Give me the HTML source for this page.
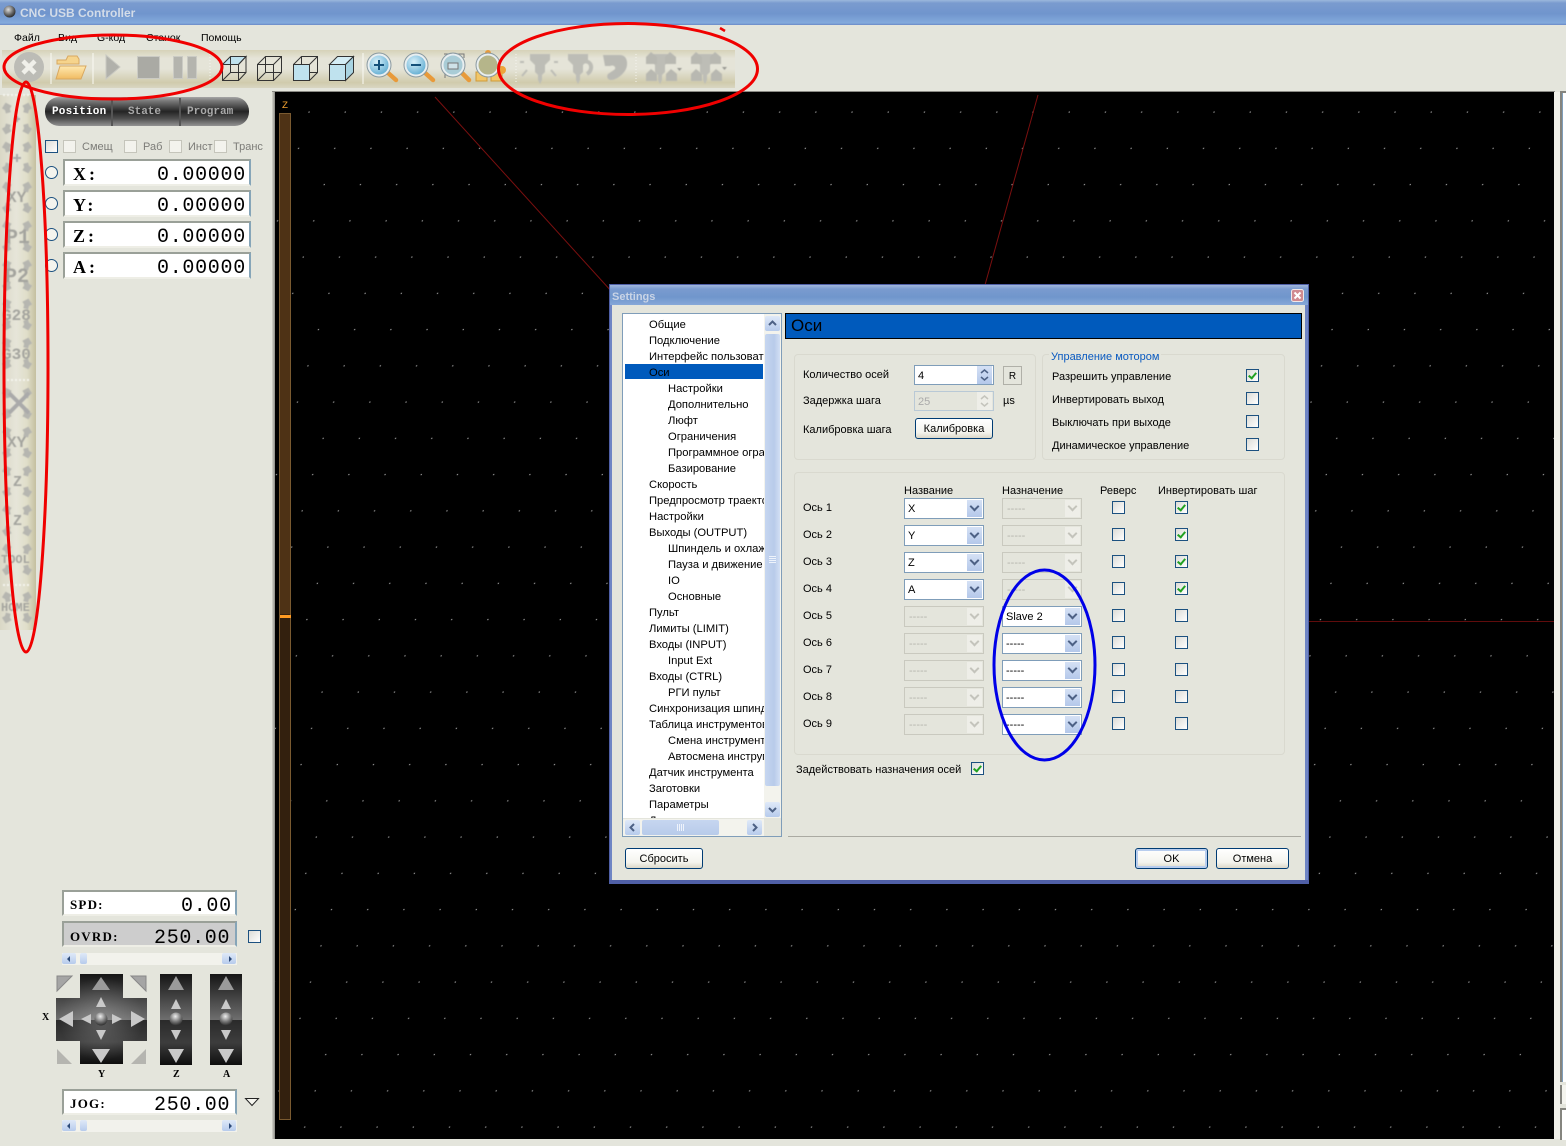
<!DOCTYPE html>
<html lang="ru"><head><meta charset="utf-8"><title>CNC USB Controller</title>
<style>
html,body{margin:0;padding:0;background:#e4e5dc}
#p{position:relative;width:1566px;height:1146px;overflow:hidden;background:#e4e5dc;font:11px/14px "Liberation Sans",sans-serif;color:#000}
#p div,#p span.a,#p svg.a{position:absolute}
.t{white-space:nowrap;transform:translateY(1px)}
.ck{width:11px;height:11px;border:1px solid #1c5180;background:linear-gradient(135deg,#dcdcd7,#fff)}
.ck.on::after{content:"";position:absolute;left:3px;top:1px;width:3px;height:6px;border:solid #21a121;border-width:0 2px 2px 0;transform:rotate(40deg)}
.ckd{width:11px;height:11px;border:1px solid #c5c5bb;background:#f3f3ed}
.rd{width:11px;height:11px;border:1px solid #1c5180;border-radius:50%;background:#f4f4ee}
.cb{width:78px;height:19px;border:1px solid #7f9db9;background:#fff;font-size:11px;line-height:21px;text-indent:3px;overflow:hidden}
.cb i{position:absolute;right:1px;top:1px;width:15px;height:17px;background:linear-gradient(#d5e1f5,#b4c8ea)}
.cb i::after{content:"";position:absolute;left:4px;top:3px;width:5px;height:5px;border:solid #4d6185;border-width:0 2px 2px 0;transform:rotate(45deg)}
.cb.d{border-color:#c9c9bf;background:#e4e5dc;color:#b5b5ad;text-indent:4px}
.cb.d i{background:#eeeee8}
.cb.d i::after{border-color:#c4c4bc}
.btn{border:1px solid #003c74;border-radius:3px;background:linear-gradient(#fff,#f4f4ee 70%,#dcd8c8);text-align:center;font-size:11px;line-height:21px;box-sizing:border-box;height:21px}
.gb{border:1px solid #d9d9cf;border-radius:4px;box-sizing:border-box}
.fld{box-sizing:border-box;left:63px;width:188px;height:27px;background:#fff;border-top:2px solid #9aa098;border-left:2px solid #9aa098;border-right:2px solid #86a5b8;border-bottom:2px solid #eeeee6}
.m{font-family:"Liberation Mono",monospace;white-space:nowrap}
.s{font-family:"Liberation Serif",serif;font-weight:bold;white-space:nowrap}
.sb{height:12px;background:#f2f2ec}
.sbb{width:14px;height:11px;background:linear-gradient(#dfe9f8,#b7cbec);border-radius:2px}
.ti{position:absolute;white-space:nowrap;height:16px;line-height:18px;font-size:11.2px}
.blr{filter:blur(.45px)}
</style></head><body>
<div id="p">

<!-- title bar -->
<div style="left:0;top:0;width:1566px;height:25px;background:linear-gradient(#9cb8dc 0,#7a9bcf 12%,#7095cd 55%,#83aadc 92%,#6a89c7 100%)"></div>
<svg class="a" style="left:2px;top:3px" width="16" height="16"><defs><radialGradient id="sph" cx=".4" cy=".35" r=".7"><stop offset="0" stop-color="#ddd"/><stop offset=".6" stop-color="#666"/><stop offset="1" stop-color="#222"/></radialGradient></defs><circle cx="7.5" cy="8.5" r="6" fill="url(#sph)"/></svg>
<div class="t" style="left:20px;top:4px;font-size:12px;font-weight:bold;line-height:16px;color:#d3dce8">CNC USB Controller</div>

<!-- menu -->
<div class="t" style="left:14px;top:30px;font-size:10.5px">Файл</div>
<div class="t" style="left:58px;top:30px;font-size:10.5px">Вид</div>
<div class="t" style="left:97px;top:30px;font-size:10.5px">G-код</div>
<div class="t" style="left:146px;top:30px;font-size:10.5px">Станок</div>
<div class="t" style="left:201px;top:30px;font-size:10.5px">Помощь</div>

<!-- toolbar -->
<div style="left:2px;top:50px;width:733px;height:38px;background:linear-gradient(#d6d2b8 0,#e5e4d8 22%,#e5e4d8 50%,#d0cbac 86%,#d9d6c2 100%)"></div>
<svg class="a" style="left:0;top:45px" width="760" height="48" viewBox="0 45 760 48">
<defs>
<radialGradient id="lens" cx=".4" cy=".35" r=".7"><stop offset="0" stop-color="#d8f0fa"/><stop offset="1" stop-color="#5aa9cf"/></radialGradient>
<linearGradient id="fold" x1="0" y1="0" x2="0" y2="1"><stop offset="0" stop-color="#ffe9b0"/><stop offset="1" stop-color="#f0bb62"/></linearGradient>
<symbol id="drill" viewBox="0 0 30 32" width="30" height="32"><path d="M5 1h20v6l-5 5v7l-3 3v5l-2 4-2-4v-5l-3-3v-7l-5-5z" fill="#bdbdb6"/></symbol>
<symbol id="pa" viewBox="0 0 12 12" width="12" height="12"><path d="M6 0l6 5v7H1V5z" fill="#b8b8b1"/></symbol>
</defs>
<circle cx="29" cy="67" r="15" fill="#bcbcb6"/><path d="M23 61l12 12M35 61L23 73" stroke="#f0f0ea" stroke-width="4.5"/>
<path d="M51 53v31M93 53v31M363 53v31" stroke="#fafaf4" stroke-width="1"/>
<path d="M57 60h9l2-4h9l2 3v5H57z" fill="#f6d48c" stroke="#d8a860"/><path d="M60 66h26l-5 13H56z" fill="url(#fold)" stroke="#d8a860"/>
<path d="M106 55l14 12-14 12z" fill="#b1b1ab" stroke="#c9c9c2"/>
<rect x="137.500" y="56.500" width="22" height="22" fill="#aaaaa4" stroke="#cbcbc4"/>
<rect x="173.500" y="56.500" width="9" height="22" fill="#b4b4ae" stroke="#cbcbc4"/><rect x="187.500" y="56.500" width="9" height="22" fill="#b4b4ae" stroke="#cbcbc4"/>
<path d="M210 54v28" stroke="#f5f5ef" stroke-dasharray="1 2"/>
<g fill="none" stroke="#333" stroke-width="1">
<path d="M230.500 56.500h15.500l-7.500 8h-16z" fill="#bfe2ee"/><path d="M222.500 64.500h16v16h-16zM238.500 64.500l7.500-8v16l-7.500 8M230.500 56.500v16h15.500M230.500 72.500l-8 8"/>
<path d="M257.500 64.500h16v16h-16zM257.500 64.500l8-8h16v16l-8 8M273.500 64.500l8-8M265.500 56.500v16h16M265.500 72.500l-8 8"/>
<path d="M293.500 64.500l8-8h16v16l-8 8M309.500 64.500l8-8M301.500 56.500v8M309.500 72.500h8"/><path d="M293.500 64.500h16v16h-16z" fill="#bfe2ee"/>
<path d="M329.500 64.500l8-8h16l-8 8z" fill="#d4edf5"/><path d="M345.500 64.500l8-8v16l-8 8z" fill="#a9d4e2"/><path d="M329.500 64.500h16v16h-16z" fill="#bfe2ee"/>
</g>
<g><path d="M387 72l9 8" stroke="#e89a3a" stroke-width="4.500" stroke-linecap="round"/><circle cx="379" cy="65" r="10.500" fill="url(#lens)" stroke="#e8eef0" stroke-width="2"/><circle cx="379" cy="65" r="12" fill="none" stroke="#8a9aa2"/><path d="M374 65h10M379 60v10" stroke="#14507a" stroke-width="2"/></g>
<g><path d="M424 72l9 8" stroke="#e89a3a" stroke-width="4.500" stroke-linecap="round"/><circle cx="416" cy="65" r="10.500" fill="url(#lens)" stroke="#e8eef0" stroke-width="2"/><circle cx="416" cy="65" r="12" fill="none" stroke="#8a9aa2"/><path d="M411 65h10" stroke="#14507a" stroke-width="2"/></g>
<g><path d="M444 54h20v4M445 70v8M463 64v10" stroke="#777" fill="none"/><path d="M461 72l8 8" stroke="#e89a3a" stroke-width="4.500" stroke-linecap="round"/><circle cx="453" cy="65" r="10.500" fill="#a9ccd6" stroke="#e8eef0" stroke-width="2"/><circle cx="453" cy="65" r="12" fill="none" stroke="#8a9aa2"/><rect x="448" y="63" width="10" height="6" fill="#cfe2e8" stroke="#777"/></g>
<g><rect x="476" y="72" width="11" height="9" fill="#f2c668" stroke="#cf9a3a"/><rect x="491" y="72" width="11" height="9" fill="#f2c668" stroke="#cf9a3a"/><circle cx="502" cy="70" r="4" fill="#eea43a"/><circle cx="488" cy="53" r="3" fill="#e89a3a"/><circle cx="488" cy="65" r="10.500" fill="#b5b58a" stroke="#e8eef0" stroke-width="2"/><circle cx="488" cy="65" r="12" fill="none" stroke="#8a9aa2"/></g>
<path d="M516 54v28M636 54v28" stroke="#f5f5ef" stroke-dasharray="1 2"/>
<g class="blr">
<use href="#drill" x="525" y="53"/><path d="M527 70l-5 6M551 70l5 6M524 62h-4M554 62h4" stroke="#bdbdb6" stroke-width="2"/>
<use href="#drill" x="563" y="53"/><path d="M582 62c10-3 12 8 5 12" fill="none" stroke="#bdbdb6" stroke-width="4"/>
<path d="M603 55h17c8 0 8 10 6 14-3 6-10 11-15 11-3 0-5-3-3-6l6-4c3-2 0-6-4-4h-5z" fill="#b9b9b3"/>
<use href="#drill" x="645" y="53"/><use href="#pa" x="645" y="52"/><use href="#pa" x="664" y="52"/><use href="#pa" x="645" y="69"/><use href="#pa" x="665" y="69"/>
<use href="#drill" x="690" y="53"/><use href="#pa" x="690" y="52"/><use href="#pa" x="709" y="52"/><use href="#pa" x="690" y="69"/><use href="#pa" x="710" y="69"/>
<path d="M677 68h5l-2.500 3zM722 67h5l-2.500 3z" fill="#9a9a94"/>
</g>
</svg>

<!-- left strip -->
<div style="left:0;top:95px;width:36px;height:535px;background:linear-gradient(90deg,#dad8c6,#e6e5d9 45%,#e0dec9 75%,#c4bf9f 100%)"></div>
<svg class="a blr" style="left:0;top:92px" width="40" height="545" viewBox="0 92 40 545" font-family="Liberation Mono, monospace" font-weight="bold" fill="#a4a49e">
<defs>
<path id="ah" d="M0-5.500L5-1 2.500 1.500v3.500h-5V1.500L-5-1z" fill="#b6b6b0"/>
<g id="four"><use href="#ah" transform="translate(7,5) rotate(-15)"/><use href="#ah" transform="translate(27,5) rotate(15)"/><use href="#ah" transform="translate(7,26) rotate(195)"/><use href="#ah" transform="translate(27,26) rotate(165)"/></g>
</defs>
<path d="M3 95h26M3 380h26M3 585h26" stroke="#f5f5ef" stroke-width="2" stroke-dasharray="2 2"/>
<use href="#four" y="103"/><path d="M14 119h6M17 116v6" stroke="#aaa" stroke-width="2"/>
<use href="#four" y="142"/><path d="M13 158h8M17 154v8" stroke="#aaa" stroke-width="2"/>
<use href="#four" y="182"/><text x="7" y="202" font-size="16">XY</text>
<use href="#four" y="221"/><text x="6" y="243" font-size="20">P1</text>
<use href="#four" y="260"/><text x="5" y="282" font-size="20">P2</text>
<use href="#four" y="299"/><text x="2" y="320" font-size="16">G28</text>
<use href="#four" y="338"/><text x="2" y="359" font-size="16">G30</text>
<use href="#four" y="388"/><path d="M9 393l20 20M29 393L9 413" stroke="#aaa" stroke-width="4"/>
<use href="#four" y="427"/><text x="7" y="447" font-size="16">XY</text>
<use href="#four" y="466"/><text x="13" y="486" font-size="15">Z</text>
<use href="#four" y="505"/><text x="13" y="525" font-size="15">Z</text>
<use href="#four" y="544"/><text x="1" y="563" font-size="12">TOOL</text>
<use href="#four" y="592"/><text x="1" y="611" font-size="12">HOME</text>
</svg>

<!-- tabs -->
<div style="left:45px;top:97px;width:204px;height:29px;border-radius:14px;background:linear-gradient(#a5a5a5 0,#777 14%,#242424 50%,#505050 75%,#939393 100%)"></div>
<div style="left:111px;top:98px;width:2px;height:28px;background:#555"></div>
<div style="left:179px;top:98px;width:2px;height:28px;background:#555"></div>
<div class="m" style="left:52px;top:105px;font-size:11px;font-weight:bold;color:#fff;letter-spacing:.2px">Position</div>
<div class="m" style="left:128px;top:105px;font-size:11px;font-weight:bold;color:#a9a9a9">State</div>
<div class="m" style="left:187px;top:105px;font-size:11px;font-weight:bold;color:#a9a9a9">Program</div>

<!-- offset checks -->
<div class="ck" style="left:45px;top:140px"></div>
<div class="ckd" style="left:63px;top:140px"></div><div class="t" style="left:82px;top:139px;color:#7c7c78">Смещ</div>
<div class="ckd" style="left:124px;top:140px"></div><div class="t" style="left:143px;top:139px;color:#7c7c78">Раб</div>
<div class="ckd" style="left:169px;top:140px"></div><div class="t" style="left:188px;top:139px;color:#7c7c78">Инст</div>
<div class="ckd" style="left:214px;top:140px"></div><div class="t" style="left:233px;top:139px;color:#7c7c78">Транс</div>

<!-- position fields -->
<div class="fld" style="top:159px"></div><div class="fld" style="top:190px"></div><div class="fld" style="top:221px"></div><div class="fld" style="top:252px"></div>
<div class="rd" style="left:45px;top:166px"></div><div class="rd" style="left:45px;top:197px"></div><div class="rd" style="left:45px;top:228px"></div><div class="rd" style="left:45px;top:259px"></div>
<div class="s" style="left:73px;top:165px;font-size:18px;line-height:18px;letter-spacing:3px">X:</div><div class="m" style="left:157px;top:166px;font-size:20px;line-height:20px;letter-spacing:.7px">0.00000</div>
<div class="s" style="left:73px;top:196px;font-size:18px;line-height:18px;letter-spacing:3px">Y:</div><div class="m" style="left:157px;top:197px;font-size:20px;line-height:20px;letter-spacing:.7px">0.00000</div>
<div class="s" style="left:73px;top:227px;font-size:18px;line-height:18px;letter-spacing:3px">Z:</div><div class="m" style="left:157px;top:228px;font-size:20px;line-height:20px;letter-spacing:.7px">0.00000</div>
<div class="s" style="left:73px;top:258px;font-size:18px;line-height:18px;letter-spacing:3px">A:</div><div class="m" style="left:157px;top:259px;font-size:20px;line-height:20px;letter-spacing:.7px">0.00000</div>

<!-- speed fields -->
<div class="fld" style="left:62px;top:890px;width:175px;height:26px"></div>
<div class="fld" style="left:62px;top:921px;width:175px;height:26px;background:#cdcdcd"></div>
<div class="fld" style="left:62px;top:1089px;width:175px;height:26px"></div>
<div class="s" style="left:70px;top:897px;font-size:13px;line-height:15px;letter-spacing:1.2px">SPD:</div>
<div class="m" style="left:181px;top:897px;font-size:20px;line-height:20px;letter-spacing:.7px">0.00</div>
<div class="s" style="left:70px;top:929px;font-size:13px;line-height:15px;letter-spacing:1.2px">OVRD:</div>
<div class="m" style="left:154px;top:929px;font-size:20px;line-height:20px;letter-spacing:.7px">250.00</div>
<div class="s" style="left:70px;top:1096px;font-size:13px;line-height:15px;letter-spacing:1.2px">JOG:</div>
<div class="m" style="left:154px;top:1096px;font-size:20px;line-height:20px;letter-spacing:.7px">250.00</div>
<div class="ck" style="left:248px;top:930px"></div>
<svg class="a" style="left:244px;top:1097px" width="17" height="10"><path d="M1.500 1.500h13l-6.500 7z" fill="#f5f5ef" stroke="#222"/></svg>

<!-- small scrollbars -->
<div class="sb" style="left:62px;top:953px;width:175px"></div>
<div class="sbb" style="left:62px;top:953px"></div><div class="sbb" style="left:80px;top:953px;width:7px"></div><div class="sbb" style="left:222px;top:953px"></div>
<div class="sb" style="left:62px;top:1120px;width:175px"></div>
<div class="sbb" style="left:62px;top:1120px"></div><div class="sbb" style="left:80px;top:1120px;width:7px"></div><div class="sbb" style="left:222px;top:1120px"></div>
<svg class="a" style="left:62px;top:953px" width="176" height="12"><path d="M8 3v6l-3-3zM167 3v6l3-3z" fill="#2c4a78"/></svg>
<svg class="a" style="left:62px;top:1120px" width="176" height="12"><path d="M8 3v6l-3-3zM167 3v6l3-3z" fill="#2c4a78"/></svg>

<!-- jog pad -->
<svg class="a" style="left:40px;top:970px" width="210" height="110" viewBox="40 970 210 110" font-family="Liberation Serif, serif" font-size="10" font-weight="bold">
<defs>
<linearGradient id="jt" x1="0" y1="0" x2="0" y2="1"><stop offset="0" stop-color="#151515"/><stop offset="1" stop-color="#6f6f6f"/></linearGradient>
<linearGradient id="jb" x1="0" y1="0" x2="0" y2="1"><stop offset="0" stop-color="#2a2a2a"/><stop offset=".5" stop-color="#3d3d3d"/><stop offset="1" stop-color="#0e0e0e"/></linearGradient>
<radialGradient id="ball" cx=".45" cy=".3" r=".75"><stop offset="0" stop-color="#eee"/><stop offset=".55" stop-color="#777"/><stop offset="1" stop-color="#222"/></radialGradient>
<radialGradient id="glow"><stop offset="0" stop-color="#fff" stop-opacity=".22"/><stop offset="1" stop-color="#fff" stop-opacity="0"/></radialGradient>
<clipPath id="cr"><path d="M80 974h43v24h24v43h-24v23H80v-23H56v-43h24z"/></clipPath>
</defs>
<g clip-path="url(#cr)"><rect x="56" y="974" width="91" height="46" fill="url(#jt)"/><rect x="56" y="1020" width="91" height="44" fill="url(#jb)"/><circle cx="101" cy="1019" r="42" fill="url(#glow)"/></g>
<rect x="160" y="974" width="32" height="46" fill="url(#jt)"/><rect x="160" y="1020" width="32" height="45" fill="url(#jb)"/>
<rect x="210" y="974" width="32" height="46" fill="url(#jt)"/><rect x="210" y="1020" width="32" height="45" fill="url(#jb)"/>
<g fill="#a5a5a5"><path d="M57 976h15l-15 15zM146 976h-15l15 15z" stroke="#888"/><path d="M57 1064h15l-15-15zM146 1064h-15l15-15z" fill="#b5b5b0"/></g>
<g fill="#9a9a9a"><path d="M101 977l9 13H92z"/><path d="M168 990l8-14 8 14zM218 990l8-14 8 14z"/></g>
<g fill="#c9c9c9"><path d="M101 1063l-9-14h18zM59 1019l14-8v16zM145 1019l-14-8v16zM176 1063l-8-14h16zM226 1063l-8-14h16z"/>
<path d="M101 997l5 10H96zM101 1040l-5-10h10zM81 1019l10-5v10zM122 1019l-10-5v10z"/>
<path d="M176 999l5 10h-10zM176 1040l-5-10h10zM226 999l5 10h-10zM226 1040l-5-10h10z"/></g>
<circle cx="101" cy="1019" r="6.500" fill="url(#ball)"/><circle cx="176" cy="1019" r="6.500" fill="url(#ball)"/><circle cx="226" cy="1019" r="6.500" fill="url(#ball)"/>
<text x="42" y="1020">X</text><text x="98" y="1077">Y</text><text x="173" y="1077">Z</text><text x="223" y="1077">A</text>
</svg>

<!-- canvas -->
<div style="left:272px;top:92px;width:3px;height:1047px;background:linear-gradient(90deg,#d4d4cc,#8b8b85)"></div>
<div style="left:272px;top:91px;width:1283px;height:1px;background:#8a8a84"></div>
<svg class="a" style="left:275px;top:92px;background:#000" width="1279" height="1047" viewBox="275 92 1279 1047">
<defs><pattern id="dots" patternUnits="userSpaceOnUse" width="36.2" height="36.25" patternTransform="skewX(-16.15)"><rect x="15.100" y="2.750" width="1.200" height="1.200" fill="#a8a8a8"/></pattern></defs>
<rect x="275" y="92" width="1279" height="1047" fill="url(#dots)"/>
<path d="M435 97L612 292M1038 95L985 285" stroke="#7a0f0f" stroke-width="1" fill="none"/>
<path d="M1308 621.500H1554" stroke="#600c0c" stroke-width="1"/>
<text x="282" y="108" font-family="Liberation Mono, monospace" font-size="10" fill="#f0a030">Z</text>
<rect x="279.500" y="113.500" width="11" height="1006" fill="#33200e" stroke="#7a5a30"/>
<rect x="280" y="114" width="10" height="500" fill="#4e3215"/>
<rect x="280" y="615" width="11" height="3" fill="#ff9a22"/>
</svg>

<!-- right edge -->
<div style="left:1554px;top:92px;width:6px;height:1047px;background:#f0f0e9"></div>
<div style="left:1560px;top:91px;width:6px;height:991px;background:#fff;border-top:2px solid #85857f;box-sizing:border-box;border-left:2px solid #85857f"></div>
<div style="left:1562px;top:93px;width:1px;height:989px;background:#7f9db9"></div>
<div style="left:1560px;top:1085px;width:6px;height:19px;background:#f4f4ee;border-left:2px solid #85857f;box-sizing:border-box"></div>
<div style="left:1560px;top:1108px;width:6px;height:32px;background:#fff;border-top:2px solid #85857f;border-left:2px solid #85857f;box-sizing:border-box"></div>

<!-- dialog -->
<div style="left:609px;top:284px;width:700px;height:600px;background:#4f5fa6;box-sizing:border-box"></div>
<div style="left:610px;top:285px;width:698px;height:20px;background:linear-gradient(#a0b6dc 0,#7a9bcf 20%,#7096cc 60%,#86a8d8 100%)"></div>
<div style="left:612px;top:305px;width:693px;height:575px;background:#e4e5dc"></div>
<div style="left:610px;top:305px;width:2px;height:575px;background:#6f85c4"></div>
<div style="left:1305px;top:305px;width:3px;height:575px;background:#6f85c4"></div>
<div class="t" style="left:612px;top:289px;font-size:11px;font-weight:bold;color:#c9d4e6">Settings</div>
<svg class="a" style="left:1291px;top:289px" width="13" height="13"><rect x=".5" y=".5" width="12" height="12" rx="2" fill="#d08a90" stroke="#f2e8e8"/><path d="M3.500 3.500l6 6M9.500 3.500l-6 6" stroke="#fff" stroke-width="2"/></svg>

<!-- tree -->
<div style="left:622px;top:313px;width:160px;height:524px;border:1px solid #7f9db9;box-sizing:border-box;background:#e4e5dc"></div>
<div style="left:623px;top:314px;width:141px;height:504px;background:#fff;overflow:hidden">
<div style="left:2px;top:50px;width:138px;height:15px;background:#005abc"></div>
<span class="ti a" style="left:26px;top:2px">Общие</span>
<span class="ti a" style="left:26px;top:18px">Подключение</span>
<span class="ti a" style="left:26px;top:34px">Интерфейс пользователя</span>
<span class="ti a" style="left:26px;top:50px">Оси</span>
<span class="ti a" style="left:45px;top:66px">Настройки</span>
<span class="ti a" style="left:45px;top:82px">Дополнительно</span>
<span class="ti a" style="left:45px;top:98px">Люфт</span>
<span class="ti a" style="left:45px;top:114px">Ограничения</span>
<span class="ti a" style="left:45px;top:130px">Программное ограничение</span>
<span class="ti a" style="left:45px;top:146px">Базирование</span>
<span class="ti a" style="left:26px;top:162px">Скорость</span>
<span class="ti a" style="left:26px;top:178px">Предпросмотр траектории</span>
<span class="ti a" style="left:26px;top:194px">Настройки</span>
<span class="ti a" style="left:26px;top:210px">Выходы (OUTPUT)</span>
<span class="ti a" style="left:45px;top:226px">Шпиндель и охлаждение</span>
<span class="ti a" style="left:45px;top:242px">Пауза и движение</span>
<span class="ti a" style="left:45px;top:258px">IO</span>
<span class="ti a" style="left:45px;top:274px">Основные</span>
<span class="ti a" style="left:26px;top:290px">Пульт</span>
<span class="ti a" style="left:26px;top:306px">Лимиты (LIMIT)</span>
<span class="ti a" style="left:26px;top:322px">Входы (INPUT)</span>
<span class="ti a" style="left:45px;top:338px">Input Ext</span>
<span class="ti a" style="left:26px;top:354px">Входы (CTRL)</span>
<span class="ti a" style="left:45px;top:370px">РГИ пульт</span>
<span class="ti a" style="left:26px;top:386px">Синхронизация шпинделя</span>
<span class="ti a" style="left:26px;top:402px">Таблица инструментов</span>
<span class="ti a" style="left:45px;top:418px">Смена инструмента</span>
<span class="ti a" style="left:45px;top:434px">Автосмена инструмента</span>
<span class="ti a" style="left:26px;top:450px">Датчик инструмента</span>
<span class="ti a" style="left:26px;top:466px">Заготовки</span>
<span class="ti a" style="left:26px;top:482px">Параметры</span>
<span class="ti a" style="left:26px;top:498px">Д</span>
</div>
<!-- tree vertical scrollbar -->
<div style="left:764px;top:314px;width:17px;height:504px;background:#f3f3ed"></div>
<div style="left:765px;top:316px;width:15px;height:15px;background:linear-gradient(#dfe9f8,#b7cbec);border-radius:2px"></div>
<div style="left:765px;top:334px;width:15px;height:452px;background:linear-gradient(90deg,#c6d6f0,#b8cbea 60%,#d2dff4);border:0;border-radius:2px"></div>
<div style="left:765px;top:802px;width:15px;height:15px;background:linear-gradient(#dfe9f8,#b7cbec);border-radius:2px"></div>
<svg class="a" style="left:765px;top:316px" width="15" height="15"><path d="M4 9l3.500-3.500L11 9" fill="none" stroke="#4d6185" stroke-width="2"/></svg>
<svg class="a" style="left:765px;top:802px" width="15" height="15"><path d="M4 6l3.500 3.500L11 6" fill="none" stroke="#4d6185" stroke-width="2"/></svg>
<svg class="a" style="left:768px;top:555px" width="9" height="9"><path d="M1 1.500h7M1 3.500h7M1 5.500h7M1 7.500h7" stroke="#eef3fb"/></svg>
<!-- tree horizontal scrollbar -->
<div style="left:623px;top:819px;width:141px;height:17px;background:#f3f3ed"></div>
<div style="left:625px;top:820px;width:15px;height:15px;background:linear-gradient(#dfe9f8,#b7cbec);border-radius:2px"></div>
<div style="left:642px;top:820px;width:77px;height:15px;background:linear-gradient(#c6d6f0,#b8cbea);border-radius:2px"></div>
<div style="left:747px;top:820px;width:15px;height:15px;background:linear-gradient(#dfe9f8,#b7cbec);border-radius:2px"></div>
<svg class="a" style="left:625px;top:820px" width="15" height="15"><path d="M9 4L5.500 7.500 9 11" fill="none" stroke="#4d6185" stroke-width="2"/></svg>
<svg class="a" style="left:747px;top:820px" width="15" height="15"><path d="M6 4l3.500 3.500L6 11" fill="none" stroke="#4d6185" stroke-width="2"/></svg>
<svg class="a" style="left:676px;top:823px" width="9" height="9"><path d="M1.500 1v7M3.500 1v7M5.500 1v7M7.500 1v7" stroke="#eef3fb"/></svg>

<!-- header band -->
<div style="left:785px;top:313px;width:517px;height:26px;background:#005abc;border:1px solid #000;box-sizing:border-box"></div>
<div class="t" style="left:791px;top:315px;font-size:17px;line-height:19px">Оси</div>

<!-- groups -->
<div class="gb" style="left:794px;top:354px;width:242px;height:106px"></div>
<div class="gb" style="left:1042px;top:354px;width:243px;height:106px"></div>
<div class="gb" style="left:794px;top:472px;width:491px;height:283px"></div>
<div class="t" style="left:1049px;top:349px;font-size:11px;color:#0a5ac0;background:#e4e5dc;padding:0 2px">Управление мотором</div>

<div class="t" style="left:803px;top:367px">Количество осей</div>
<div class="t" style="left:803px;top:393px">Задержка шага</div>
<div class="t" style="left:803px;top:422px">Калибровка шага</div>
<div style="left:914px;top:365px;width:78px;height:18px;border:1px solid #7f9db9;background:#fff;line-height:20px;text-indent:3px">4</div>
<div style="left:977px;top:366px;width:15px;height:18px;background:linear-gradient(#d5e1f5,#b4c8ea)"></div>
<svg class="a" style="left:977px;top:366px" width="15" height="18"><path d="M4 7l3.500-3L11 7M4 11l3.500 3L11 11" fill="none" stroke="#4d6185" stroke-width="1.500"/></svg>
<div style="left:914px;top:391px;width:78px;height:18px;border:1px solid #b9c9d6;background:#e4e5dc;color:#aaa;line-height:20px;text-indent:3px">25</div>
<div style="left:977px;top:392px;width:15px;height:18px;background:#eeeee8"></div>
<svg class="a" style="left:977px;top:392px" width="15" height="18"><path d="M4 7l3.500-3L11 7M4 11l3.500 3L11 11" fill="none" stroke="#c4c4bc" stroke-width="1.500"/></svg>
<div class="btn" style="left:915px;top:418px;width:78px">Калибровка</div>
<div style="left:1003px;top:366px;width:17px;height:17px;border:1px solid #b0b0a8;text-align:center;font-size:10px;line-height:20px">R</div>
<div class="t" style="left:1003px;top:393px">µs</div>

<div class="t" style="left:1052px;top:369px">Разрешить управление</div>
<div class="t" style="left:1052px;top:392px">Инвертировать выход</div>
<div class="t" style="left:1052px;top:415px">Выключать при выходе</div>
<div class="t" style="left:1052px;top:438px">Динамическое управление</div>
<div class="ck on" style="left:1246px;top:369px"></div>
<div class="ck" style="left:1246px;top:392px"></div>
<div class="ck" style="left:1246px;top:415px"></div>
<div class="ck" style="left:1246px;top:438px"></div>

<div class="t" style="left:904px;top:483px">Название</div>
<div class="t" style="left:1002px;top:483px">Назначение</div>
<div class="t" style="left:1100px;top:483px">Реверс</div>
<div class="t" style="left:1158px;top:483px">Инвертировать шаг</div>

<div class="t" style="left:803px;top:500px">Ось 1</div><div class="cb" style="left:904px;top:498px">X<i></i></div><div class="cb d" style="left:1002px;top:498px">-----<i></i></div><div class="ck" style="left:1112px;top:501px"></div><div class="ck on" style="left:1175px;top:501px"></div>
<div class="t" style="left:803px;top:527px">Ось 2</div><div class="cb" style="left:904px;top:525px">Y<i></i></div><div class="cb d" style="left:1002px;top:525px">-----<i></i></div><div class="ck" style="left:1112px;top:528px"></div><div class="ck on" style="left:1175px;top:528px"></div>
<div class="t" style="left:803px;top:554px">Ось 3</div><div class="cb" style="left:904px;top:552px">Z<i></i></div><div class="cb d" style="left:1002px;top:552px">-----<i></i></div><div class="ck" style="left:1112px;top:555px"></div><div class="ck on" style="left:1175px;top:555px"></div>
<div class="t" style="left:803px;top:581px">Ось 4</div><div class="cb" style="left:904px;top:579px">A<i></i></div><div class="cb d" style="left:1002px;top:579px">-----<i></i></div><div class="ck" style="left:1112px;top:582px"></div><div class="ck on" style="left:1175px;top:582px"></div>
<div class="t" style="left:803px;top:608px">Ось 5</div><div class="cb d" style="left:904px;top:606px">-----<i></i></div><div class="cb" style="left:1002px;top:606px">Slave 2<i></i></div><div class="ck" style="left:1112px;top:609px"></div><div class="ck" style="left:1175px;top:609px"></div>
<div class="t" style="left:803px;top:635px">Ось 6</div><div class="cb d" style="left:904px;top:633px">-----<i></i></div><div class="cb" style="left:1002px;top:633px">-----<i></i></div><div class="ck" style="left:1112px;top:636px"></div><div class="ck" style="left:1175px;top:636px"></div>
<div class="t" style="left:803px;top:662px">Ось 7</div><div class="cb d" style="left:904px;top:660px">-----<i></i></div><div class="cb" style="left:1002px;top:660px">-----<i></i></div><div class="ck" style="left:1112px;top:663px"></div><div class="ck" style="left:1175px;top:663px"></div>
<div class="t" style="left:803px;top:689px">Ось 8</div><div class="cb d" style="left:904px;top:687px">-----<i></i></div><div class="cb" style="left:1002px;top:687px">-----<i></i></div><div class="ck" style="left:1112px;top:690px"></div><div class="ck" style="left:1175px;top:690px"></div>
<div class="t" style="left:803px;top:716px">Ось 9</div><div class="cb d" style="left:904px;top:714px">-----<i></i></div><div class="cb" style="left:1002px;top:714px">-----<i></i></div><div class="ck" style="left:1112px;top:717px"></div><div class="ck" style="left:1175px;top:717px"></div>

<div class="t" style="left:796px;top:762px">Задействовать назначения осей</div>
<div class="ck on" style="left:971px;top:762px"></div>
<div style="left:788px;top:836px;width:513px;height:1px;background:#aaaaa2"></div>
<div class="btn" style="left:625px;top:848px;width:78px">Сбросить</div>
<div class="btn" style="left:1135px;top:848px;width:73px;box-shadow:inset 0 0 0 2px #b8cdee">OK</div>
<div class="btn" style="left:1216px;top:848px;width:73px">Отмена</div>

<!-- annotations -->
<svg class="a" style="left:0;top:0" width="1566" height="1146" fill="none">
<ellipse cx="113" cy="67" rx="109" ry="32" stroke="#f00000" stroke-width="3"/>
<ellipse cx="628" cy="69" rx="129.500" ry="45.500" stroke="#f00000" stroke-width="3"/>
<ellipse cx="26" cy="367" rx="22" ry="285" stroke="#f00000" stroke-width="3"/>
<path d="M720 28l5 3" stroke="#f00000" stroke-width="2.500"/>
<ellipse cx="1044.500" cy="665" rx="50.500" ry="95" stroke="#0000e8" stroke-width="3"/>
</svg>
</div>
</body></html>
